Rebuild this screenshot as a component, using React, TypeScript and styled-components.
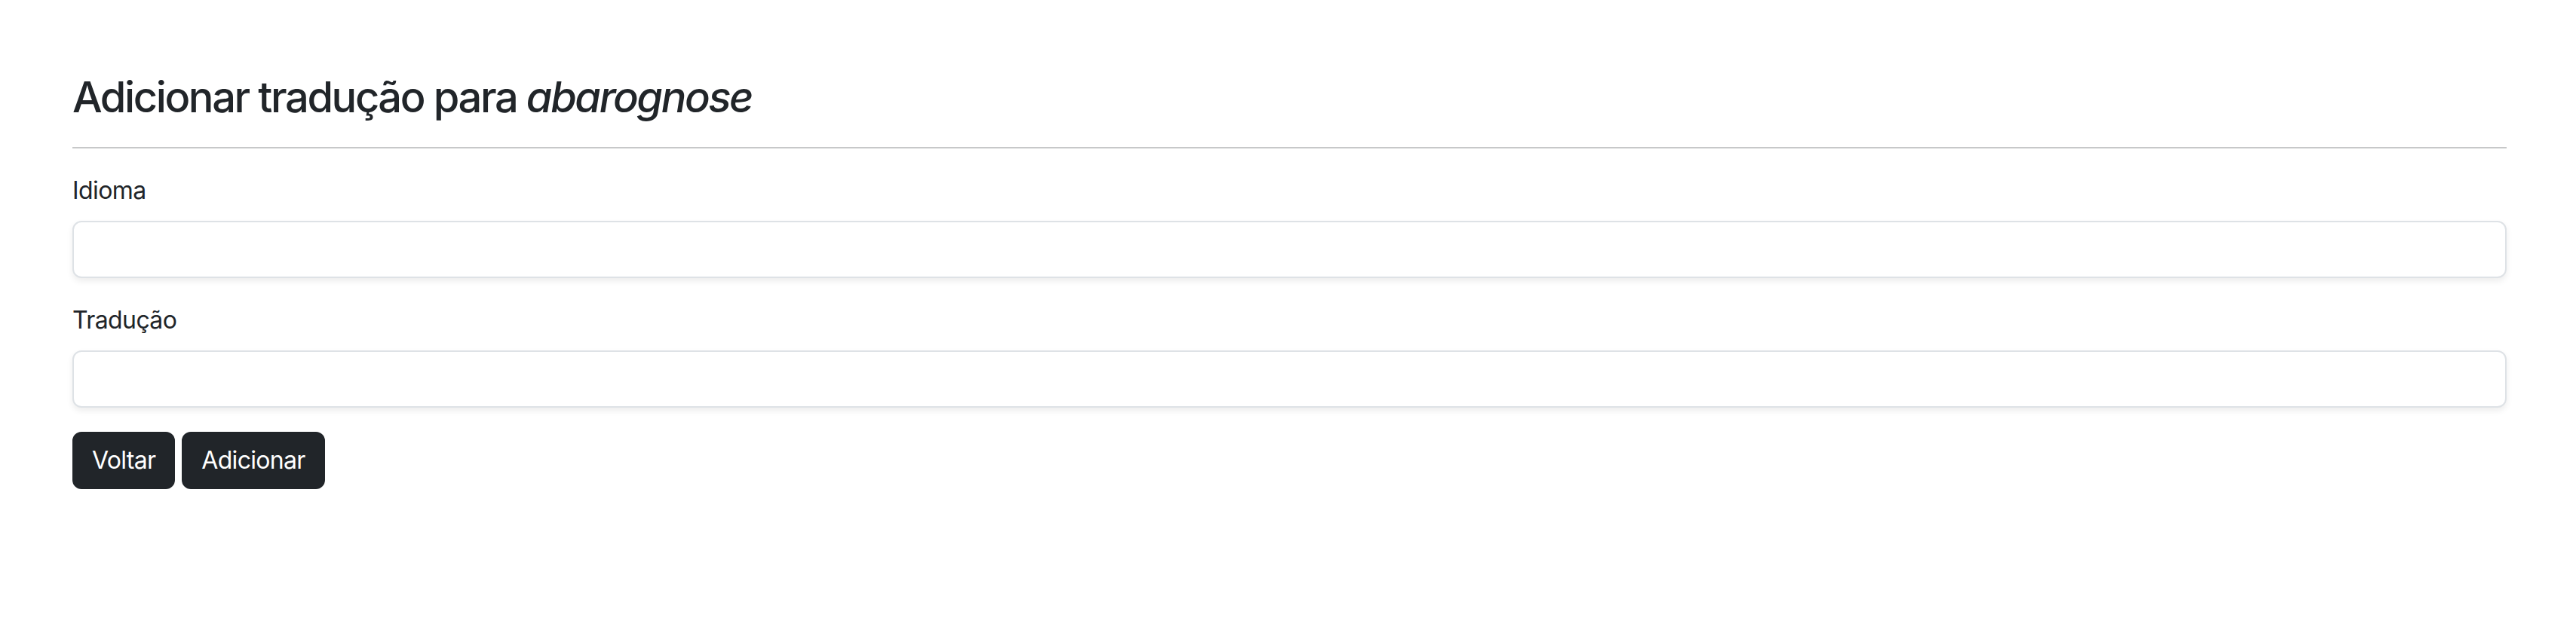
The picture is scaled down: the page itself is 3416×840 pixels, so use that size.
import React from "react";
import styled, { createGlobalStyle } from "styled-components";

const Global = createGlobalStyle`
  html, body { margin: 0; padding: 0; background: #ffffff; }
  body {
    font-family: Inter, "Noto Sans", "Liberation Sans", sans-serif;
    font-size: 32px;
    line-height: 1.5;
    letter-spacing: -0.6px;
    color: #212529;
  }
  * { box-sizing: border-box; }
`;

const Page = styled.main`
  padding: 96px 92px 0 96px;
`;

const Title = styled.h3`
  margin: 0;
  font-size: 56px;
  font-weight: 500;
  line-height: 1.2;
  letter-spacing: -2.4px;
  color: #212529;
  em { font-style: italic; }
`;

const Rule = styled.hr`
  margin: 32px 0;
  border: 0;
  border-top: 2px solid #212529;
  opacity: 0.25;
`;

const Field = styled.div`
  margin-bottom: 32px;
`;

const Label = styled.label`
  display: inline-block;
  margin-bottom: 16px;
  font-size: 32px;
  line-height: 48px;
`;

const Input = styled.input`
  display: block;
  width: 100%;
  height: 76px;
  padding: 12px 24px;
  font-family: inherit;
  font-size: 32px;
  line-height: 48px;
  color: #212529;
  background: #ffffff;
  border: 2px solid #dee2e6;
  border-radius: 12px;
  box-shadow: 0 4px 8px rgba(0, 0, 0, 0.075);
  outline: none;
`;

const Actions = styled.div`
  display: flex;
  gap: 9px;
`;

const Button = styled.button`
  display: inline-block;
  padding: 12px 24px;
  font-family: inherit;
  font-size: 32px;
  font-weight: 400;
  line-height: 48px;
  letter-spacing: -0.7px;
  color: #ffffff;
  background: #212529;
  border: 2px solid #212529;
  border-radius: 12px;
  cursor: pointer;
`;

export default function App() {
  return (
    <>
      <Global />
      <Page>
        <Title>
          Adicionar tradução para <em>abarognose</em>
        </Title>
        <Rule />
        <form onSubmit={(e) => e.preventDefault()}>
          <Field>
            <Label htmlFor="idioma">Idioma</Label>
            <Input id="idioma" type="text" />
          </Field>
          <Field>
            <Label htmlFor="traducao">Tradução</Label>
            <Input id="traducao" type="text" />
          </Field>
          <Actions>
            <Button type="button">Voltar</Button>
            <Button type="submit">Adicionar</Button>
          </Actions>
        </form>
      </Page>
    </>
  );
}
